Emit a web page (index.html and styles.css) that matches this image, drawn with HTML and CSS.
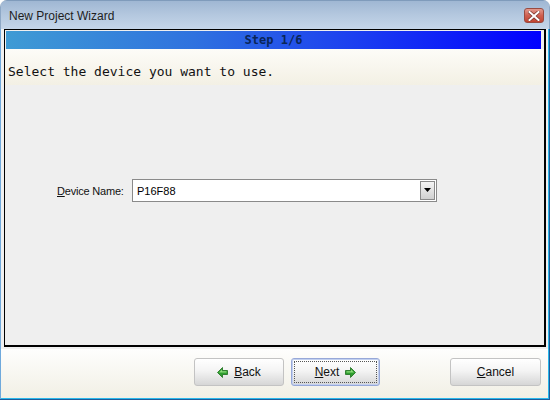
FILE: index.html
```html
<!DOCTYPE html>
<html>
<head>
<meta charset="utf-8">
<link rel="stylesheet" href="styles.css">
</head>
<body>
<div class="window">
  <div class="titlebar">
    <span class="title">New Project Wizard</span>
    <span class="close">
      <svg width="12" height="10" viewBox="0 0 12 10"><path d="M1.5 1 L10.5 9 M10.5 1 L1.5 9" stroke="#7a3a30" stroke-width="3.4" stroke-linecap="square"/><path d="M1.5 1 L10.5 9 M10.5 1 L1.5 9" stroke="#fff" stroke-width="2" stroke-linecap="square"/></svg>
    </span>
  </div>
  <div class="frame">
    <div class="panel">
      <div class="stepbar">Step 1/6</div>
      <div class="intro">Select the device you want to use.</div>
      <div class="content">
        <div class="field">
          <label class="label"><u>D</u>evice Name:</label>
          <div class="combo">
            <span class="combo-value">P16F88</span>
            <span class="combo-btn">
              <svg width="8" height="5" viewBox="0 0 8 5"><path d="M0 0 H7 L3.5 4 Z" fill="#000"/></svg>
            </span>
          </div>
        </div>
      </div>
    </div>
    <div class="footer">
      <button class="btn">
        <svg class="arrow" width="11" height="11" viewBox="0 0 11 11"><path d="M0.5 5.5 L5.5 0.5 V3.5 H10.5 V7.5 H5.5 V10.5 Z" fill="#2f9e2f" stroke="#1c6e1c" stroke-width="0.8"/><path d="M2 5.5 L5 2.5 V4.3 H9.5 V5.5 Z" fill="#8fdc7c"/></svg>
        <span><u>B</u>ack</span>
      </button>
      <button class="btn focus">
        <span class="focus-inner">
          <span><u>N</u>ext</span>
          <svg class="arrow" width="11" height="11" viewBox="0 0 11 11"><path d="M10.5 5.5 L5.5 0.5 V3.5 H0.5 V7.5 H5.5 V10.5 Z" fill="#2f9e2f" stroke="#1c6e1c" stroke-width="0.8"/><path d="M9 5.5 L6 2.5 V4.3 H1.5 V5.5 Z" fill="#8fdc7c"/></svg>
        </span>
      </button>
      <button class="btn cancel"><span><u>C</u>ancel</span></button>
    </div>
  </div>
</div>
</body>
</html>
```
FILE: styles.css
```css
html, body {
  margin: 0;
  padding: 0;
  background: #ffffff;
}
.window {
  width: 550px;
  height: 400px;
  display: flex;
  flex-direction: column;
  box-sizing: border-box;
  background: #f3f1e8;
  border-radius: 7px 7px 0 0;
  overflow: hidden;
  font-family: "Liberation Sans", Arial, sans-serif;
}
.titlebar {
  height: 29px;
  flex: none;
  display: flex;
  align-items: center;
  justify-content: space-between;
  padding: 0 5px 0 8px;
  background: linear-gradient(#9fb7d3, #b4c8df 50%, #c5d6ea);
  border-top: 1px solid #7f9bbb;
  box-sizing: border-box;
  border-left: 1px solid #8ea8c6;
  border-right: 1px solid #8ea8c6;
}
.title {
  font-size: 12px;
  color: #1e1e1e;
  padding-top: 1px;
}
.close {
  width: 20px;
  height: 15px;
  box-sizing: border-box;
  border: 1px solid #9a4b40;
  border-radius: 3px;
  background: linear-gradient(#e29a8e, #cf5f50 50%, #c04433);
  display: flex;
  align-items: center;
  justify-content: center;
  margin-top: 1px;
}
.frame {
  flex: 1;
  display: flex;
  flex-direction: column;
  margin-left: -2px;
  padding: 0 1px 1px 4px;
  border-left: 2px solid #d7e2ef;
  border-bottom: 1px solid #1d5a9a;
  border-right: 1px solid #1d5a9a;
  box-shadow: inset 1px 0 0 #6fa9dc, inset -1px 0 0 #2ab7ea, inset 0 -1px 0 #2ab7ea;
  background: linear-gradient(#fefefd, #f1efe4) bottom / 100% 50px no-repeat, #f0f0f0;
}
.panel {
  height: 318px;
  flex: none;
  box-sizing: border-box;
  margin-right: 2px;
  border-style: solid;
  border-color: #000;
  border-width: 1px 2px 2px 1px;
  background: #efefef;
  display: flex;
  flex-direction: column;
}
.stepbar {
  height: 18px;
  flex: none;
  margin: 1px 3px 0 1px;
  background: linear-gradient(to right, #3f9bd4, #2f72df 35%, #1c3ff0 65%, #0000ff 100%);
  color: #0a2658;
  font-family: "DejaVu Sans Mono", monospace;
  font-weight: bold;
  font-size: 12px;
  line-height: 18px;
  text-align: center;
}
.intro {
  height: 36px;
  flex: none;
  box-sizing: border-box;
  padding: 14px 0 0 3px;
  background: linear-gradient(#fdfcf8, #f3f0e4);
  font-family: "DejaVu Sans Mono", monospace;
  font-size: 13px;
  line-height: 17px;
  color: #111;
}
.content {
  flex: 1;
  padding: 94px 0 0 52px;
}
.field {
  display: flex;
  align-items: center;
}
.label {
  font-size: 11px;
  color: #111;
  width: 75px;
  flex: none;
  white-space: nowrap;
  letter-spacing: -0.2px;
}
.combo {
  width: 305px;
  height: 23px;
  box-sizing: border-box;
  border: 1px solid #8a8a8a;
  background: #fff;
  display: flex;
  align-items: center;
  justify-content: space-between;
  padding: 0 1px 0 4px;
}
.combo-value {
  font-size: 11px;
  color: #000;
}
.combo-btn {
  width: 15px;
  height: 19px;
  box-sizing: border-box;
  border: 1px solid #8a8a8a;
  background: linear-gradient(#f4f4f4, #d0d0d0);
  display: flex;
  align-items: center;
  justify-content: center;
}
.footer {
  flex: 1;
  display: flex;
  align-items: flex-start;
  padding: 11px 7px 0 0;
  justify-content: flex-end;
  gap: 7px;
}
.btn {
  width: 90px;
  height: 28px;
  box-sizing: border-box;
  border: 1px solid #c3c3c3;
  border-radius: 3px;
  background: linear-gradient(#ffffff, #f4f4f4 45%, #d6d6d6);
  font-family: "Liberation Sans", Arial, sans-serif;
  font-size: 12px;
  color: #111;
  display: flex;
  align-items: center;
  justify-content: center;
  gap: 6px;
  padding: 0;
}
.btn.focus {
  width: 89px;
  border: 1px solid #97a8d8;
  box-shadow: inset 0 0 0 1px #c2d0f0;
  padding: 2px;
}
.focus-inner {
  flex: 1;
  align-self: stretch;
  border: 1px dotted #555;
  display: flex;
  align-items: center;
  justify-content: center;
  gap: 6px;
}
.btn.cancel {
  width: 91px;
  margin-left: 63px;
}
.arrow {
  flex: none;
}
```
